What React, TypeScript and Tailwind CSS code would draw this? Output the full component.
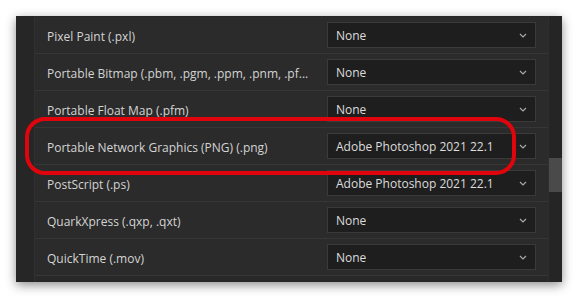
import React from "react"

const rows = [
  { label: "Pixel Paint (.pxl)", value: "None" },
  { label: "Portable Bitmap (.pbm, .pgm, .ppm, .pnm, .pf...", value: "None" },
  { label: "Portable Float Map (.pfm)", value: "None" },
  { label: "Portable Network Graphics (PNG) (.png)", value: "Adobe Photoshop 2021 22.1" },
  { label: "PostScript (.ps)", value: "Adobe Photoshop 2021 22.1" },
  { label: "QuarkXpress (.qxp, .qxt)", value: "None" },
  { label: "QuickTime (.mov)", value: "None" },
]

function Chevron() {
  return (
    <svg width="8" height="5" viewBox="0 0 8 5" className="text-[#a8a8a8]">
      <path d="M1 1 L4 4 L7 1" fill="none" stroke="currentColor" strokeWidth="1.2" />
    </svg>
  )
}

export default function App() {
  return (
    <div
      className="w-[579px] h-[299px] bg-white pt-[16px] pl-[16px]"
      style={{ fontFamily: '"Open Sans", "Noto Sans", sans-serif' }}
    >
      <div className="relative w-[546px] h-[266px] bg-[#282828] flex shadow-[0_3px_10px_rgba(0,0,0,0.45)]">
        <div className="w-[19px] bg-[#262626] border-r border-[#303030]" />
        <div className="flex-1 flex flex-col pt-[1px]">
          {rows.map((r) => (
            <div
              key={r.label}
              className="h-[37px] shrink-0 flex items-center border-b border-[#363636] bg-[#2b2b2b]"
            >
              <div className="w-[292px] pl-[12px] pt-[3px] text-[12px] text-[#d4d4d4] whitespace-nowrap overflow-hidden">
                {r.label}
              </div>
              <div className="w-[209px] h-[26px] bg-[#1e1e1e] border border-[#3a3a3a] flex items-center justify-between pl-[8px] pr-[8px]">
                <span className="text-[12px] pt-[1px] text-[#dcdcdc] whitespace-nowrap">{r.value}</span>
                <Chevron />
              </div>
            </div>
          ))}
        </div>
        <div className="w-[14px] bg-[#252525] border-l border-[#2f2f2f] pt-[142px]">
          <div className="h-[34px] bg-[#4a4a4a]" />
        </div>
        <div className="absolute left-[9px] top-[101px] w-[491px] h-[58px] border-[4px] border-[#e0040c] rounded-[20px] pointer-events-none" />
      </div>
    </div>
  )
}
